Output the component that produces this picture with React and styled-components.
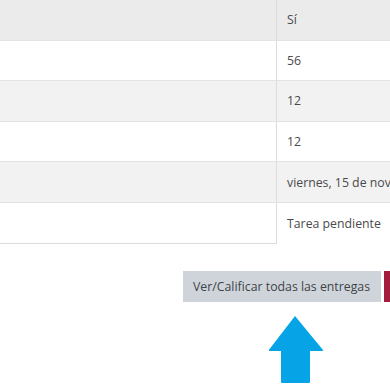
import React from "react";
import styled, { createGlobalStyle } from "styled-components";

const GlobalStyle = createGlobalStyle`
  html, body {
    margin: 0;
    padding: 0;
    background: #fff;
  }
  body {
    width: 390px;
    height: 390px;
    overflow: hidden;
    font-family: "Open Sans", "Noto Sans", sans-serif;
  }
  * {
    box-sizing: border-box;
  }
`;

const Page = styled.div`
  width: 390px;
  height: 390px;
  overflow: hidden;
`;

const Table = styled.div`
  width: 560px;
  display: flex;
  flex-direction: column;
`;

const Row = styled.div`
  display: grid;
  grid-template-columns: 277px 1fr;
  height: 40.6px;
  background: ${props => props.bg || "#fff"};
  border-bottom: 1px solid #e3e3e3;
  &:last-child {
    border-bottom: none;
    height: 41px;
  }
`;

const LabelCell = styled.div`
  border-right: 1px solid #dcdcdc;
  ${props => props.last && "border-bottom: 1px solid #dcdcdc;"}
`;

const ValueCell = styled.div`
  display: flex;
  align-items: center;
  padding-left: 10px;
  font-size: 12.3px;
  color: #4a4a4a;
  white-space: nowrap;
`;

const Actions = styled.div`
  display: flex;
  gap: 3px;
  margin-top: 27px;
  padding-left: 183px;
  width: 600px;
`;

const Button = styled.div`
  height: 31px;
  display: flex;
  align-items: center;
  padding: 0 10px;
  font-size: 12.3px;
  color: #3f4449;
  background: ${props => (props.primary ? "#a51d3d" : "#ced4da")};
  white-space: nowrap;
  width: ${props => (props.primary ? "120px" : "198px")};
`;

const ArrowWrap = styled.div`
  padding-left: 269px;
  margin-top: 14px;
  line-height: 0;
`;

const rows = [
  { value: "Sí", bg: "#ebebeb" },
  { value: "56" },
  { value: "12", bg: "#f2f2f2" },
  { value: "12" },
  { value: "viernes, 15 de noviembre de 2019, 23:59", bg: "#f2f2f2" },
  { value: "Tarea pendiente" }
];

const UpArrow = () => (
  <svg width="56" height="68" viewBox="0 0 56 68">
    <path
      d="M26 0 L54 34 Q55 35 53 35 L41 35 L41 66 Q41 67 40 67 L13 67 Q12 67 12 66 L12 35 L0.5 35 Q-1 35 0 33.8 Z"
      fill="#06a3e6"
    />
  </svg>
);

export default () => (
  <Page>
    <GlobalStyle />
    <Table>
      {rows.map((r, i) => (
        <Row key={i} bg={r.bg}>
          <LabelCell last={i === rows.length - 1} />
          <ValueCell>{r.value}</ValueCell>
        </Row>
      ))}
    </Table>
    <Actions>
      <Button>Ver/Calificar todas las entregas</Button>
      <Button primary />
    </Actions>
    <ArrowWrap>
      <UpArrow />
    </ArrowWrap>
  </Page>
);
